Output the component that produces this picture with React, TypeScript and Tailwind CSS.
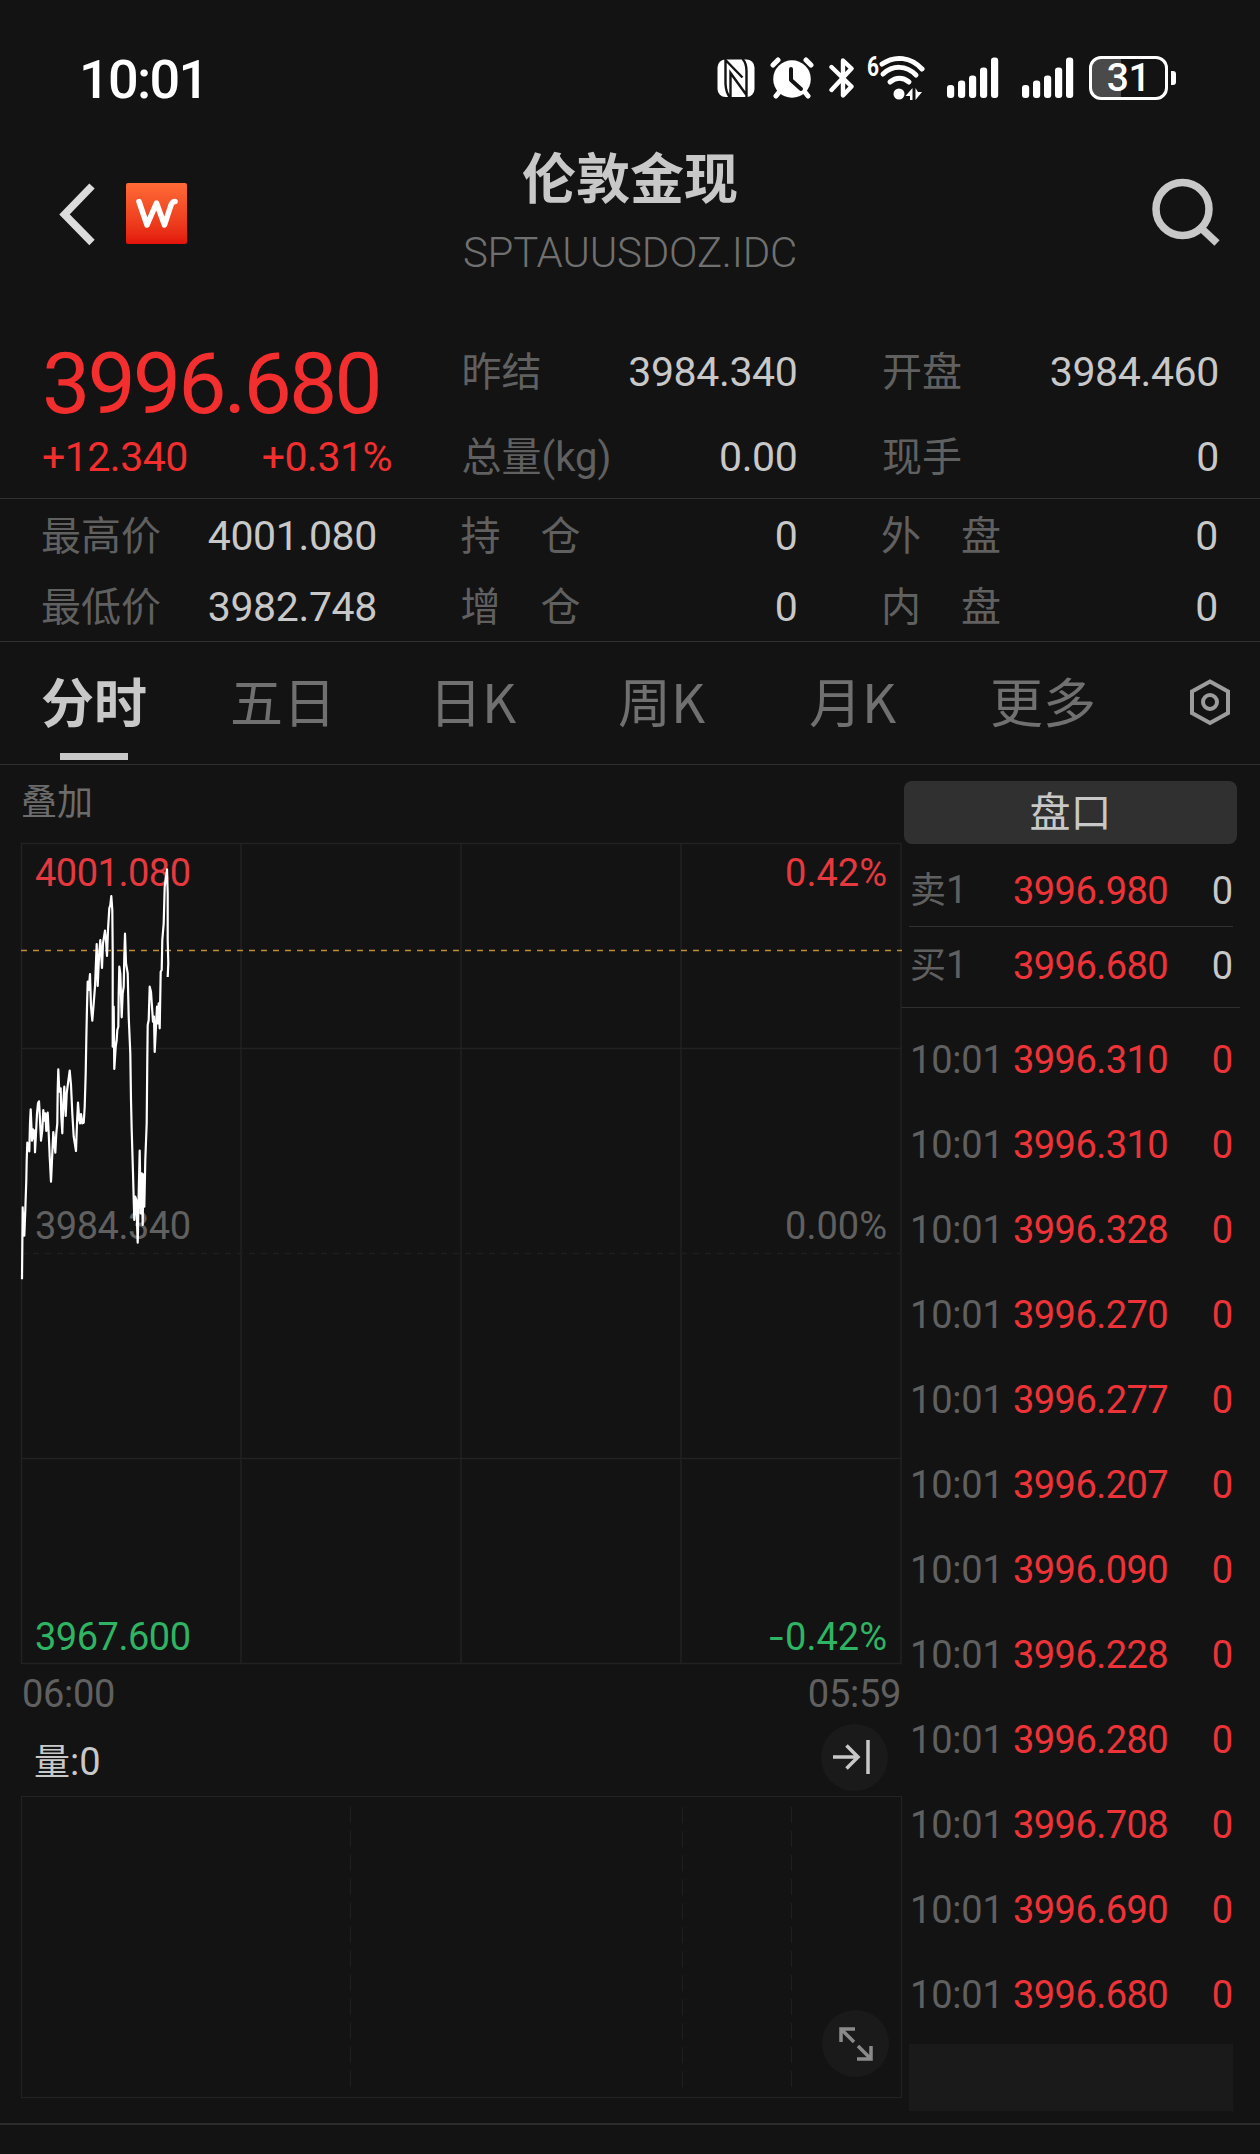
import React from "react";

const LATIN = "font-[Roboto,'Noto_Sans_CJK_SC',sans-serif]";

const linePoints: [number, number][] = [
  [66, 1318], [68, 1102], [70, 1155], [72, 1120], [73, 1187], [76, 1110], [79, 1020], [80, 960], [82, 908], [85, 918], [88, 934],
  [90, 850], [92, 808], [94, 850], [96, 902], [99, 868], [101, 895], [104, 872], [105, 937], [108, 880], [111, 820], [114, 790], [117, 784],
  [120, 840], [123, 902], [127, 870], [130, 810], [133, 842], [136, 820], [139, 873], [143, 818], [146, 880], [149, 950], [153, 1025],
  [156, 960], [160, 876], [163, 905], [166, 938], [169, 880], [172, 850], [173, 750], [175, 688], [178, 755], [182, 745], [184, 830], [187, 880],
  [190, 790], [193, 740], [197, 828], [200, 760], [204, 730], [209, 692], [213, 735], [217, 820], [221, 890], [228, 933], [231, 850], [234, 788],
  [238, 840], [240, 850], [243, 822], [247, 850], [251, 848], [254, 800], [257, 700], [259, 600], [261, 500], [263, 425], [266, 450], [270, 402],
  [273, 500], [277, 542], [281, 490], [285, 440], [290, 312], [293, 438], [297, 350], [301, 300], [306, 384], [309, 310], [315, 272], [318, 300],
  [321, 348], [324, 270], [328, 205], [331, 195], [334, 168], [337, 210], [338, 330], [338, 620], [341, 500], [343, 687], [347, 620], [350, 600], [352, 570], [355, 560],
  [356, 460], [358, 380], [361, 400], [365, 532], [368, 460], [371, 440], [373, 350], [375, 281], [378, 370], [383, 400], [386, 530], [391, 640],
  [393, 780], [395, 870], [399, 1000], [403, 1140], [406, 1070], [409, 1080], [413, 1208], [416, 1060], [419, 932], [422, 1120], [425, 1000], [428, 1155],
  [430, 1003], [433, 1100], [436, 960], [440, 850], [442, 660], [443, 555], [446, 540], [449, 440], [453, 455], [456, 500], [459, 545], [462, 530], [464, 636],
  [468, 560], [471, 500], [474, 550], [476, 490], [479, 565], [482, 395], [485, 390], [487, 300], [491, 250], [494, 140], [498, 110], [501, 88], [503, 160],
  [503, 300], [505, 370], [503, 411],
];
const pricePath = linePoints.map(([x, y]) => `${(x / 3 - 21).toFixed(1)},${(y / 3 - 3).toFixed(1)}`).join(" ");

const ticks = [
  "3996.310", "3996.310", "3996.328", "3996.270", "3996.277", "3996.207",
  "3996.090", "3996.228", "3996.280", "3996.708", "3996.690", "3996.680",
];

function SignalBars() {
  return (
    <svg className="h-[42px] w-[52px] shrink-0" viewBox="0 0 52 42" fill="#fff">
      <rect x="0" y="28" width="7.2" height="13" rx="3" />
      <rect x="11" y="23.5" width="7.2" height="17.5" rx="3" />
      <rect x="22" y="18.5" width="7.2" height="22.5" rx="3" />
      <rect x="33" y="10.5" width="7.2" height="30.5" rx="3" />
      <rect x="44" y="0.5" width="7.2" height="40.5" rx="3" />
    </svg>
  );
}

function StatusBar() {
  return (
    <div className="flex h-[146px] items-start justify-between pl-[79px] pr-[84px]">
      <span className="mt-[53px] text-[54px] font-medium leading-[53px] tracking-[-1.7px] text-white">10:01</span>
      <div className="mt-[54px] flex h-[48px] items-center">
        <svg className="h-[40px] w-[38px]" viewBox="0 0 38 40">
          <rect x="0.5" y="1.5" width="37" height="37.5" rx="8" fill="#fff" />
          <path d="M8.500 1V26Q9 34 12.500 39M8.500 2L25.500 19.500M25.500 1Q29.500 5 29.500 13V39M13.500 39V15L29.500 37" fill="none" stroke="#131313" strokeWidth="2.4" />
        </svg>
        <svg className="ml-[15px] h-[42px] w-[44px]" viewBox="0 0 44 42">
          <g stroke="#fff" strokeWidth="5" strokeLinecap="round">
            <path d="M3 8l5-5M41 8l-5-5M10 34l-4 5M34 34l4 5" />
          </g>
          <circle cx="22" cy="22" r="18.8" fill="#fff" />
          <path d="M21 12v11l10 9" fill="none" stroke="#131313" strokeWidth="4" strokeLinecap="round" strokeLinejoin="round" />
        </svg>
        <svg className="ml-[15px] h-[42px] w-[26px]" viewBox="0 0 26 42" fill="none" stroke="#fff" strokeWidth="4.400" strokeLinejoin="round" strokeLinecap="round">
          <path d="M2.500 10L22.500 29.500L14 38.500V3.500L22.500 11.500L2.500 33" />
        </svg>
        <div className="relative ml-[12px] h-[46px] w-[60px]">
          <span className="absolute left-0 top-[-4px] origin-left scale-x-75 text-[28px] font-bold leading-[32px] text-white">6</span>
          <svg className="h-full w-full" viewBox="0 0 60 46">
            <g fill="none" stroke="#fff" strokeWidth="5" strokeLinecap="round">
              <path d="M15 9c13-9 29-7 40 5" />
              <path d="M16 19c10-9 23-9 33 1" />
              <path d="M23 27c6-5 13-5 19 0" />
            </g>
            <circle cx="32" cy="39" r="5.5" fill="#fff" />
            <path d="M38.500 41L45.500 33V45H43V41ZM48.500 33V45L55 37H51Z" fill="#fff" />
          </svg>
        </div>
        <div className="ml-[20px] flex gap-[23px]">
          <SignalBars />
          <SignalBars />
        </div>
        <div className="ml-[15px] flex items-center gap-[3px]">
          <div className="flex h-[44px] w-[79px] items-center justify-center rounded-[12px] border-[3px] border-white bg-[linear-gradient(90deg,#4a4a4a_0_40%,#131313_40%)] pt-px text-[39px] font-medium leading-none tracking-[-0.5px] text-white">
            31
          </div>
          <span className="h-[14px] w-[5px] rounded-r-[3px] bg-white" />
        </div>
      </div>
    </div>
  );
}

function Header() {
  return (
    <header className="flex h-[170px] justify-between pl-[58px] pr-[39px]">
      <div className="flex w-[300px] items-start pt-[36px]">
        <svg className="h-[64px] w-[38px]" viewBox="0 0 38 64" fill="none" stroke="#dcdcdc" strokeWidth="7.500">
          <path d="M34 4L6.500 32.500L34 60.500" />
        </svg>
        <div className="ml-[30px] mt-px flex h-[61px] w-[61px] items-center justify-center rounded-[2px] bg-linear-to-b from-[#ff6a36] to-[#e3120b]">
          <svg className="h-[32px] w-[44px]" viewBox="0 0 44 32" fill="none" stroke="#fff" strokeWidth="5.500" strokeLinecap="round" strokeLinejoin="round">
            <path d="M4 3.500L12 27L21.500 5L29.500 27L36 7q1.500-3.500 4-3.500" />
          </svg>
        </div>
      </div>
      <div className="flex flex-col items-center pt-[8px]">
        <h1 className="text-[54px] font-bold leading-[54px] text-[#c8c8c8]">伦敦金现</h1>
        <p className="mt-[24px] text-[42px] font-light leading-[42px] tracking-[-0.2px] text-[#707070]">SPTAUUSDOZ.IDC</p>
      </div>
      <div className="flex w-[319px] justify-end pt-[32px]">
        <svg className="h-[70px] w-[70px]" viewBox="0 0 70 70" fill="none" stroke="#c8c8c8" strokeWidth="7.500">
          <circle cx="31.500" cy="31" r="26.500" />
          <path d="M50 50L66 65" />
        </svg>
      </div>
    </header>
  );
}

function Pair({ label, value }: { label: string; value: string }) {
  return (
    <div className="flex items-center justify-between">
      <span className="whitespace-pre pt-[2px] text-[40px] leading-[46px] text-[#606060]">{label}</span>
      <span className="text-[41px] tracking-[-0.35px] text-[#c8c8c8]">{value}</span>
    </div>
  );
}

function Quote() {
  return (
    <section>
      <div className="grid h-[183px] grid-cols-[335px_336px_337px] gap-x-[84.5px] border-b border-[#303030] pl-[42px] leading-[48px]">
        <div className="text-[#f22e2e]">
          <div className="mt-[30px] text-[86px] leading-[76px] tracking-[-2.9px]">3996.680</div>
          <div className="mt-[11px] flex w-[350px] justify-between text-[41px] tracking-[-0.5px]">
            <span>+12.340</span>
            <span>+0.31%</span>
          </div>
        </div>
        <div className="flex flex-col gap-[37px] pt-[32px]">
          <Pair label="昨结" value="3984.340" />
          <Pair label="总量(kg)" value="0.00" />
        </div>
        <div className="flex flex-col gap-[37px] pt-[32px]">
          <Pair label="开盘" value="3984.460" />
          <Pair label="现手" value="0" />
        </div>
      </div>
      <div className="grid h-[143px] grid-cols-[336px_337px_337px] content-start gap-x-[83.5px] gap-y-[23px] border-b border-[#303030] pl-[41px] pt-[13px] leading-[48px]">
        <Pair label="最高价" value="4001.080" />
        <Pair label="持　仓" value="0" />
        <Pair label="外　盘" value="0" />
        <Pair label="最低价" value="3982.748" />
        <Pair label="增　仓" value="0" />
        <Pair label="内　盘" value="0" />
      </div>
    </section>
  );
}

function Tabs() {
  return (
    <nav className="flex h-[123px] items-start border-b border-[#303030] pl-[41px] font-['Noto_Sans_CJK_SC',sans-serif] text-[53px] leading-[60px] text-[#707070]">
      <div className="mt-[28px] flex w-[189px] flex-col items-start">
        <span className="font-bold text-[#c8c8c8]">分时</span>
        <span className="ml-[19px] mt-[23px] h-[7px] w-[68px] bg-[#c8c8c8]" />
      </div>
      <span className="mt-[28px] w-[199px]">五日</span>
      <span className="mt-[28px] w-[189px]">日K</span>
      <span className="mt-[28px] w-[191px]">周K</span>
      <span className="mt-[28px] w-[181px]">月K</span>
      <span className="mt-[28px] w-[197px]">更多</span>
      <svg className="mt-[35px] h-[50px] w-[46px]" viewBox="0 0 46 50" fill="none" stroke="#9c9c9c" strokeWidth="4">
        <path d="M23 4.500L41 14.500V36L23 46L5 36V14.500Z" />
        <circle cx="23" cy="25" r="7" />
      </svg>
    </nav>
  );
}

function PriceChart() {
  return (
    <div className="relative h-[821px] w-[881px]">
      <svg className="h-full w-full overflow-visible" viewBox="0 0 881 821" fill="none">
        <g stroke="#222" strokeWidth="1.500">
          <rect x="0.500" y="0.500" width="879.500" height="820" />
          <path d="M220 0V821M440 0V821M660 0V821M0 205.500H881M0 615.500H881" />
          <path d="M0 410.500H881" strokeDasharray="6 6" stroke="#1e1e1e" />
        </g>
        <path d="M0 107.500H881" stroke="#c08f35" strokeWidth="1.400" strokeDasharray="6 6" />
      </svg>
      <div className="absolute inset-0 text-[38px] leading-[44px]">
        <div className="absolute left-[14px] right-[15px] top-[8px] flex justify-between text-[#e5393f]"><span className="tracking-[-0.5px]">4001.080</span><span>0.42%</span></div>
        <div className="absolute left-[14px] right-[15px] top-[361px] flex justify-between text-[#606060]"><span className="tracking-[-0.5px]">3984.340</span><span>0.00%</span></div>
        <div className="absolute bottom-[5px] left-[14px] right-[15px] flex justify-between text-[#2fb463]">
          <span className="tracking-[-0.5px]">3967.600</span>
          <span><span className="mr-[2px] inline-block origin-right scale-x-[1.35]">-</span>0.42%</span>
        </div>
      </div>
      <svg className="absolute inset-0 h-full w-full overflow-visible" viewBox="0 0 881 821" fill="none">
        <polyline points={pricePath} stroke="#fff" strokeWidth="2.200" strokeLinejoin="round" />
      </svg>
    </div>
  );
}

function ChartColumn() {
  return (
    <div className="w-[880px] shrink-0">
      <div className="h-[78px] pt-[14px] text-[36px] leading-[48px] text-[#6c6c6c]">叠加</div>
      <PriceChart />
      <div className="flex h-[60px] items-center justify-between pl-px text-[38px] tracking-[-0.3px] text-[#606060]"><span>06:00</span><span>05:59</span></div>
      <div className="flex h-[72px] items-center justify-between pl-[13px] pr-[13px] text-[38px] text-[#c8c8c8]">
        <span className="pt-[5px]"><span className="text-[36px]">量</span>:0</span>
        <div className="mt-[-6px] flex h-[67px] w-[67px] items-center justify-center rounded-full bg-[#1a1a1a]">
          <svg className="mr-[7px] h-[38px] w-[38px]" viewBox="0 0 38 38" fill="none" stroke="#c8c8c8" strokeWidth="3.500">
            <path d="M1 19H26M14.500 7.500L26 19L14.500 30.500M36 2V36" />
          </svg>
        </div>
      </div>
      <div className="relative h-[302px] w-[881px] border border-[#232323]">
        <svg className="h-full w-full" viewBox="0 0 879 300" fill="none" stroke="#1f1f1f">
          <path d="M328.500 10V292M660.500 10V292M769.500 10V292" strokeDasharray="16 8" />
        </svg>
        <div className="absolute bottom-[20px] right-[12px] flex h-[67px] w-[67px] items-center justify-center rounded-full bg-[#1a1a1a]">
          <svg className="h-[36px] w-[36px]" viewBox="0 0 36 36" fill="none" stroke="#8a8a8a" strokeWidth="3.500">
            <path d="M3 16V3H17M3 3L16 16M33 20V33H19M33 33L20 20" />
          </svg>
        </div>
      </div>
    </div>
  );
}

function BookRow({ label, price }: { label: string; price: string }) {
  return (
    <div className="grid grid-cols-[103px_1fr_auto] items-center pl-[9px] pr-[7px] text-[38px] leading-[48px]">
      <span className="text-[#606060]"><span className="text-[36px]">{label}</span>1</span>
      <span className="tracking-[-0.55px] text-[#ee3338]">{price}</span>
      <span className="text-[#c8c8c8]">0</span>
    </div>
  );
}

function OrderBook() {
  return (
    <aside className="w-[339px]">
      <div className="ml-[3px] mt-[16px] flex h-[63px] w-[333px] items-center justify-center rounded-[8px] bg-[#303030] pt-[2px] text-[41px] leading-none text-[#c8c8c8]">盘口</div>
      <div className="mt-[22px]"><BookRow label="卖" price="3996.980" /></div>
      <div className="ml-[8px] mr-[7px] mt-[11px] h-px bg-[#303030]" />
      <div className="mt-[14px]"><BookRow label="买" price="3996.680" /></div>
      <div className="mt-[17px] h-px bg-[#303030]" />
      <div className="mt-[10px]">
        {ticks.map((price, i) => (
          <div key={i} className="grid h-[84.98px] grid-cols-[103px_1fr_auto] items-center pl-[9px] pr-[7px] text-[38px] text-[#ee3338]">
            <span className="tracking-[-0.2px] text-[#606060]">10:01</span>
            <span className="tracking-[-0.55px]">{price}</span>
            <span>0</span>
          </div>
        ))}
      </div>
      <div className="ml-[8px] mt-[6px] h-[67px] w-[324px] bg-[#1a1a1a]" />
    </aside>
  );
}

export default function App() {
  return (
    <main className={`${LATIN} h-[2154px] w-[1260px] overflow-hidden bg-[#131313]`}>
      <StatusBar />
      <Header />
      <Quote />
      <Tabs />
      <div className="flex h-[1360px] border-b-2 border-[#2b2b2b] pl-[21px]">
        <ChartColumn />
        <OrderBook />
      </div>
    </main>
  );
}
